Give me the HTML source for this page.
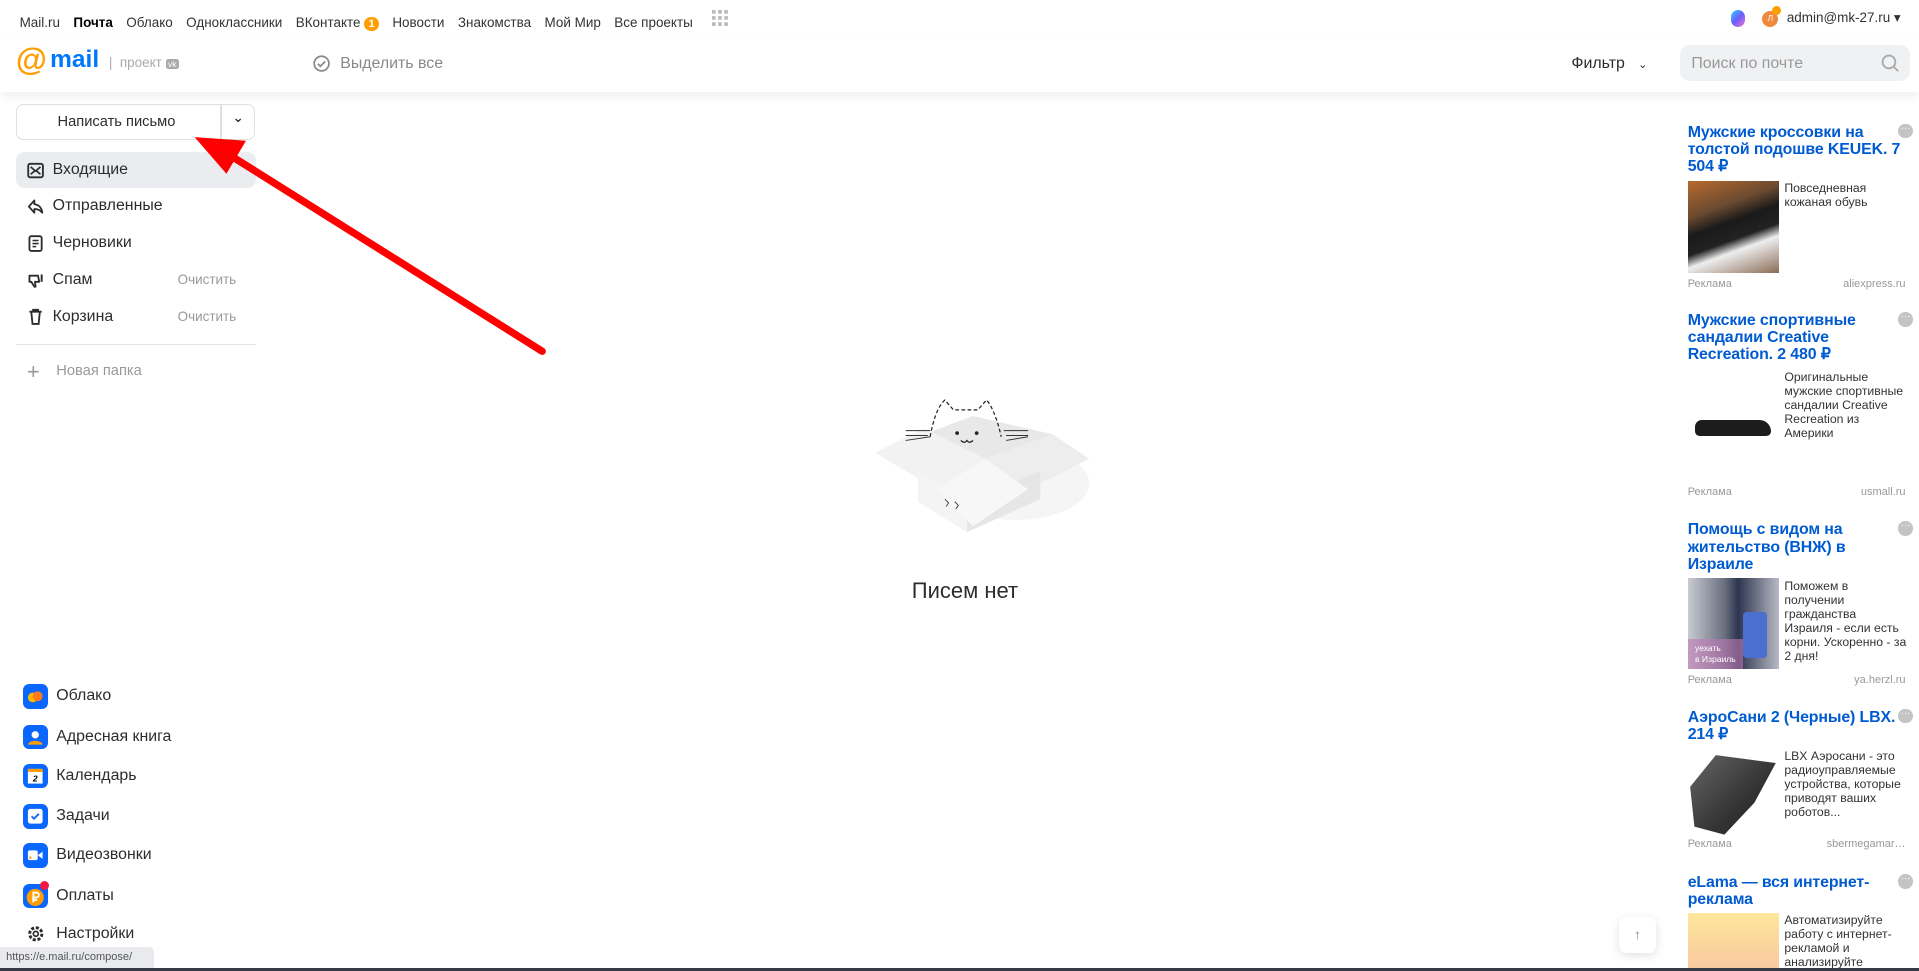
<!DOCTYPE html>
<html><head><meta charset="utf-8"><style>
html,body{margin:0;padding:0;width:1919px;height:971px;overflow:hidden;background:#fff}
#w{position:relative;width:1568px;height:794px;zoom:1.22385;font-family:"Liberation Sans","DejaVu Sans",sans-serif;color:#2c2d2e}
.a{position:absolute;white-space:nowrap}
.top span{margin-right:11px;font-size:11px;color:#333}
.nav{position:absolute;left:13px;width:196px;height:30px;font-size:13px;line-height:30px;white-space:nowrap}
.nav .ic{position:absolute;left:9px;top:8px;width:14px;height:14px}
.nav .t{position:absolute;left:30px}
.nav .c{position:absolute;right:16px;font-size:11px;color:#999}
.app{position:absolute;left:19px;font-size:13px;height:20px;line-height:20px;white-space:nowrap}
.app i{position:absolute;left:0;top:0;width:20px;height:20px;border-radius:5px;background:#0a66ff}
.app span{position:absolute;left:27px;white-space:nowrap}
.ad{position:absolute;left:1379px;width:178px}
.ad .h{font:bold 13px/14px "Liberation Sans",sans-serif;color:#005bd1;width:184px;letter-spacing:-0.1px}
.ad .img{position:absolute;left:0;width:75px;height:75px}
.ad .d{position:absolute;left:79px;width:100px;font-size:10px;line-height:11.5px;color:#333}
.ad .r{position:absolute;left:0;font-size:9px;color:#999}
.ad .s{position:absolute;right:0;font-size:9px;color:#999}
.dots{position:absolute;right:-6px;top:0;width:12px;height:12px;border-radius:50%;background:#c4c4c4;color:#fff;font-size:8px;line-height:8px;text-align:center}
</style></head><body><div id="w">
<div class="a top" style="left:16px;top:8px">
<span>Mail.ru</span><span style="font-weight:bold;color:#000">Почта</span><span>Облако</span><span>Одноклассники</span><span>ВКонтакте <b style="display:inline-block;width:12px;height:12px;border-radius:6px;background:#ff9e00;color:#fff;font-size:9px;text-align:center;line-height:12px">1</b></span><span>Новости</span><span>Знакомства</span><span>Мой Мир</span><span>Все проекты</span>
</div>
<svg class="a" style="left:582px;top:8px" width="13" height="13"><g fill="#bbb"><rect x="0" y="0" width="3" height="3"/><rect x="5" y="0" width="3" height="3"/><rect x="10" y="0" width="3" height="3"/><rect x="0" y="5" width="3" height="3"/><rect x="5" y="5" width="3" height="3"/><rect x="10" y="5" width="3" height="3"/><rect x="0" y="10" width="3" height="3"/><rect x="5" y="10" width="3" height="3"/><rect x="10" y="10" width="3" height="3"/></g></svg>
<div class="a" style="left:1414px;top:8px;width:12px;height:14px;border-radius:6px;background:linear-gradient(135deg,#2fd3ff,#6a5cff,#f07ad0)"></div>
<div class="a" style="left:1440px;top:9px;width:13px;height:13px;border-radius:7px;background:#f08a3a;color:#fff;font-size:7px;text-align:center;line-height:13px">Л</div>
<div class="a" style="left:1448px;top:5px;width:7px;height:7px;border-radius:4px;background:#ff9e00"></div>
<div class="a" style="left:1460px;top:8px;font-size:11px;color:#333">admin@mk-27.ru ▾</div>
<div class="a" style="left:0;top:30px;width:1568px;height:45px;box-shadow:0 4px 8px rgba(0,0,0,0.06)"></div>
<div class="a" style="left:13px;top:36px;font-size:26px;font-weight:bold;color:#ff9e00;line-height:26px">@</div>
<div class="a" style="left:41px;top:38px;font-size:20px;font-weight:bold;color:#0077ff;line-height:22px">mail</div>
<div class="a" style="left:89px;top:45px;font-size:11px;color:#aaa">| &nbsp;проект <span style="background:#aaa;color:#fff;font-size:7px;padding:0 2px;border-radius:2px">vk</span></div>
<svg class="a" style="left:256px;top:45px" width="14" height="14"><circle cx="7" cy="7" r="6" fill="none" stroke="#888" stroke-width="1.4"/><path d="M4 7.2l2 2 4-4" fill="none" stroke="#888" stroke-width="1.4"/></svg>
<div class="a" style="left:278px;top:45px;font-size:13px;color:#888">Выделить все</div>
<div class="a" style="left:1284px;top:45px;font-size:13px;color:#2c2d2e">Фильтр &nbsp;&nbsp;<span style="font-size:9px">⌄</span></div>
<div class="a" style="left:1373px;top:37px;width:188px;height:29px;border-radius:8px;background:#f0f1f3"></div>
<div class="a" style="left:1382px;top:45px;font-size:13px;color:#999">Поиск по почте</div>
<svg class="a" style="left:1537px;top:44px" width="15" height="15"><circle cx="6.5" cy="6.5" r="5.2" fill="none" stroke="#aaa" stroke-width="1.5"/><path d="M10.5 10.5l3.5 3.5" stroke="#aaa" stroke-width="1.5"/></svg>
<div class="a" style="left:13px;top:85px;width:194px;height:28px;border:1px solid #dfe0e3;border-radius:6px"></div>
<div class="a" style="left:180px;top:86px;width:1px;height:28px;background:#dfe0e3"></div>
<div class="a" style="left:47px;top:93px;font-size:12px;color:#2c2d2e">Написать письмо</div>
<div class="a" style="left:190px;top:90px;font-size:11px;font-weight:bold">⌄</div>
<div class="nav" style="top:124px;background:#ebecef;border-radius:7px"><svg class="ic" viewBox="0 0 14 14"><rect x="1" y="1.5" width="12" height="11" rx="1.5" fill="none" stroke="#2c2d2e" stroke-width="1.5"/><path d="M3 4l4 3.5L11 4M3 10l3-2.5M11 10l-3-2.5" fill="none" stroke="#2c2d2e" stroke-width="1.4"/></svg><span class="t">Входящие</span></div>
<div class="nav" style="top:154px"><svg class="ic" viewBox="0 0 14 14"><path d="M6 2L1.5 7 6 12V9c3 0 5 1 6.5 3-0.5-4-3-6.5-6.5-7V2z" fill="none" stroke="#2c2d2e" stroke-width="1.5" stroke-linejoin="round"/></svg><span class="t">Отправленные</span></div>
<div class="nav" style="top:184px"><svg class="ic" viewBox="0 0 14 14"><rect x="2" y="1" width="10" height="12" rx="1.5" fill="none" stroke="#2c2d2e" stroke-width="1.5"/><path d="M4.5 4.5h5M4.5 7h5M4.5 9.5h3" stroke="#2c2d2e" stroke-width="1.3"/></svg><span class="t">Черновики</span></div>
<div class="nav" style="top:214px"><svg class="ic" viewBox="0 0 14 14"><path d="M2 3h7l1 5H6.5l0.5 4h-1L3.5 8H2z" fill="none" stroke="#2c2d2e" stroke-width="1.5" stroke-linejoin="round"/><path d="M12 2v6" stroke="#2c2d2e" stroke-width="1.6"/></svg><span class="t">Спам</span><span class="c">Очистить</span></div>
<div class="nav" style="top:244px"><svg class="ic" viewBox="0 0 14 14"><path d="M2 3h10M5 3V1.5h4V3M3.5 3l1 10h5l1-10" fill="none" stroke="#2c2d2e" stroke-width="1.5"/></svg><span class="t">Корзина</span><span class="c">Очистить</span></div>
<div class="a" style="left:13px;top:281px;width:196px;height:1px;background:#e3e4e6"></div>
<div class="a" style="left:22px;top:295px;font-size:18px;color:#999;line-height:18px">+</div>
<div class="a" style="left:46px;top:297px;font-size:12px;color:#999">Новая папка</div>
<svg class="a" style="left:0;top:0" width="460" height="300"><path d="M443 287L185 125" stroke="#f00" stroke-width="6" stroke-linecap="round"/><path d="M159 112L201 115 185 142z" fill="#f00"/></svg>
<div class="app" style="top:559px"><i><svg width="20" height="20"><circle cx="8" cy="11" r="4" fill="#ffb800"/><circle cx="12" cy="10" r="4" fill="#ff7a1a"/></svg></i><span>Облако</span></div>
<div class="app" style="top:592px"><i><svg width="20" height="20"><circle cx="10" cy="8" r="3" fill="#fff"/><path d="M4 16c1-4 11-4 12 0z" fill="#ff9e00"/></svg></i><span>Адресная книга</span></div>
<div class="app" style="top:624px"><i><svg width="20" height="20"><rect x="4" y="4" width="12" height="12" fill="#fff"/><rect x="4" y="4" width="12" height="2.5" fill="#ff9e00"/><text x="10" y="14.5" font-size="7" font-weight="bold" text-anchor="middle" font-family="Liberation Sans">2</text></svg></i><span>Календарь</span></div>
<div class="app" style="top:657px"><i><svg width="20" height="20"><rect x="4" y="4" width="12" height="12" rx="2" fill="#fff"/><path d="M7 10l2 2 4-4" fill="none" stroke="#0a66ff" stroke-width="1.5"/></svg></i><span>Задачи</span></div>
<div class="app" style="top:689px"><i><svg width="20" height="20"><rect x="4" y="6" width="8" height="8" rx="1.5" fill="#fff"/><path d="M12 10l4-3v6z" fill="#fff"/><circle cx="6" cy="12" r="1" fill="#ff9e00"/></svg></i><span>Видеозвонки</span></div>
<div class="app" style="top:722px"><i><svg width="20" height="20"><circle cx="10" cy="11" r="7" fill="#ff9e00"/><path d="M8.5 15V7h2.5a2 2 0 010 4H7.5M7.5 13h4" fill="none" stroke="#fff" stroke-width="1.5"/></svg></i><span>Оплаты</span></div>
<div class="a" style="left:33px;top:720px;width:7px;height:7px;border-radius:4px;background:#f31943"></div>
<div class="app" style="top:753px"><svg style="position:absolute;left:2px;top:2px" width="16" height="16" viewBox="0 0 16 16"><circle cx="8" cy="8" r="5" fill="none" stroke="#2c2d2e" stroke-width="2.4" stroke-dasharray="2.5 1.4"/><circle cx="8" cy="8" r="2" fill="none" stroke="#2c2d2e" stroke-width="1.4"/></svg><span>Настройки</span></div>
<div class="a" style="left:0;top:774px;width:126px;height:17px;background:#e8eaed;border-radius:0 4px 0 0;font-size:9px;line-height:17px;color:#555;padding-left:5px;box-sizing:border-box">https://e.mail.ru/compose/</div>
<div class="a" style="left:0;top:791px;width:1568px;height:3px;background:#333a44"></div>
<svg class="a" style="left:710px;top:300px" width="190" height="140" viewBox="0 0 190 140">
<ellipse cx="120" cy="95" rx="60" ry="30" fill="#f5f5f5"/>
<path d="M45 55L85 40 150 55 95 75z" fill="#e8e8e8"/>
<path d="M5 70L45 50 95 75 55 100z" fill="#f2f2f2"/>
<path d="M95 75L150 55 180 75 130 100z" fill="#ededed"/>
<path d="M40 85L80 110 80 135 40 110z" fill="#f4f4f4"/>
<path d="M80 110L140 85 140 108 80 135z" fill="#e6e6e6"/>
<path d="M55 100L95 75 130 100 85 130z" fill="#f7f7f7"/>
<path d="M50 57c2-12 6-25 12-30l7 8h20l7-8c5 5 10 20 12 30" fill="none" stroke="#222" stroke-width="1" stroke-dasharray="3 2"/>
<circle cx="72" cy="54" r="1.5" fill="#222"/><circle cx="88" cy="54" r="1.5" fill="#222"/>
<path d="M75 60q3 3 5 0q2 3 5 0" fill="none" stroke="#222" stroke-width="1"/>
<path d="M30 52h20M30 60l20-3M30 56h18M110 52h20M112 60l18-3M112 56h18" stroke="#333" stroke-width="0.8"/>
<path d="M62 108l3 3-2 3M70 110l3 3-2 3" stroke="#444" fill="none" stroke-width="0.8"/>
</svg>
<div class="a" style="left:745px;top:472px;font-size:18px;color:#2c2d2e">Писем нет</div>
<div class="a" style="left:1323px;top:749px;width:30px;height:30px;border-radius:6px;background:#fff;box-shadow:0 2px 8px rgba(0,0,0,0.12);text-align:center;line-height:30px;font-size:11px;color:#888">↑</div>
<div class="ad" style="top:101px"><div class="dots">···</div><div class="h">Мужские кроссовки на толстой подошве KEUEK. 7 504 ₽</div>
<div class="img" style="top:47px;background:linear-gradient(160deg,#b86a2e 0,#6a4a30 30%,#1a1a1a 45%,#222 60%,#eee 70%,#8a6b55 100%)"></div>
<div class="d" style="top:47px">Повседневная кожаная обувь</div><div class="r" style="top:126px">Реклама</div><div class="s" style="top:126px">aliexpress.ru</div></div>
<div class="ad" style="top:255px"><div class="dots">···</div><div class="h">Мужские спортивные сандалии Creative Recreation. 2 480 ₽</div>
<div class="img" style="top:48px;background:#fff"><div style="position:absolute;left:6px;top:40px;width:62px;height:13px;border-radius:6px 10px 4px 4px;background:#1c1c1c"></div></div>
<div class="d" style="top:47px">Оригинальные мужские спортивные сандалии Creative Recreation из Америки</div><div class="r" style="top:142px">Реклама</div><div class="s" style="top:142px">usmall.ru</div></div>
<div class="ad" style="top:426px"><div class="dots">···</div><div class="h">Помощь с видом на жительство (ВНЖ) в Израиле</div>
<div class="img" style="top:46px;background:linear-gradient(90deg,#c9cbd2,#6b7080 40%,#2d3550 55%,#b8bac4);"><div style="position:absolute;left:45px;top:28px;width:20px;height:38px;background:#4a6fd0;border-radius:3px"></div><div style="position:absolute;left:0;top:50px;width:45px;height:25px;background:rgba(190,120,180,.6);color:#fff;font-size:7px;line-height:9px;padding:3px 0 0 6px;box-sizing:border-box">уехать<br>в Израиль</div></div>
<div class="d" style="top:47px">Поможем в получении гражданства Израиля - если есть корни. Ускоренно - за 2 дня!</div><div class="r" style="top:125px">Реклама</div><div class="s" style="top:125px">ya.herzl.ru</div></div>
<div class="ad" style="top:579px"><div class="dots">···</div><div class="h">АэроСани 2 (Черные) LBX. 5 214 ₽</div>
<div class="img" style="top:33px;background:#fff"><div style="position:absolute;left:2px;top:5px;width:70px;height:65px;background:linear-gradient(135deg,#666,#333 60%,#222);clip-path:polygon(30% 0,100% 10%,75% 60%,40% 100%,5% 90%,0 40%)"></div></div>
<div class="d" style="top:33px">LBX Аэросани - это радиоуправляемые устройства, которые приводят ваших роботов...</div><div class="r" style="top:106px">Реклама</div><div class="s" style="top:106px">sbermegamar…</div></div>
<div class="ad" style="top:714px"><div class="dots">···</div><div class="h">eLama — вся интернет-реклама</div>
<div class="img" style="top:32px;height:45px;background:linear-gradient(180deg,#fde79a,#f9c9a0)"></div>
<div class="d" style="top:32px;height:45px;overflow:hidden">Автоматизируйте работу с интернет-рекламой и анализируйте</div></div>
</div></body></html>
